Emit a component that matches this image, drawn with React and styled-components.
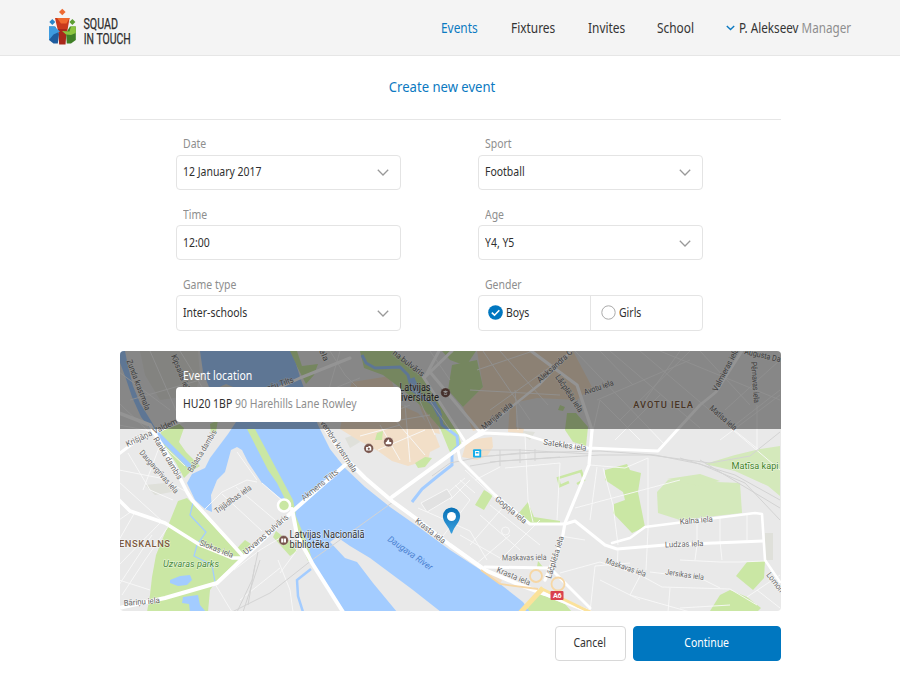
import React from "react";
import styled, { createGlobalStyle } from "styled-components";

const GlobalStyle = createGlobalStyle`
  * { box-sizing: border-box; }
  body {
    margin: 0;
    background: #fff;
    color: #2f2f2f;
    font: 12px/16px "Noto Sans", "Open Sans", sans-serif;
  }
  button { font: inherit; color: inherit; }
`;

const Page = styled.div`
  width: 900px;
  height: 675px;
  overflow: hidden;
`;

/* Condensed face: squeezes the glyphs without touching their height. */
const Narrow = styled.span`
  display: inline-block;
  white-space: nowrap;
  transform: scaleX(${(p) => p.$by || 0.872});
  transform-origin: ${(p) => (p.$center ? "50%" : "0")} 50%;
`;

const Header = styled.header`
  display: flex;
  justify-content: space-between;
  height: 56px;
  padding: 0 42px 0 48px;
  background: #f4f4f4;
  border-bottom: 1px solid #e6e6e6;
`;

const LogoArt = styled.svg`
  display: block;
  width: 92px;
  height: 55px;
`;

const Nav = styled.nav`
  display: flex;
  align-items: center;
  height: 55px;
  font-size: 14px;
`;

const NavLink = styled.a`
  width: ${(p) => p.$width}px;
  color: ${(p) => (p.$active ? "#0b79c1" : "#333")};
`;

const Account = styled.div`
  display: flex;
  align-items: center;
  gap: 4px;
  width: 132px;
  color: #333;
  svg { flex: none; }
`;

const Muted = styled.span`
  color: #8e8e8e;
`;

const Main = styled.main`
  width: 660.5px;
  margin-left: 120px;
`;

const Title = styled.h1`
  margin: 0;
  height: 63px;
  padding-right: 17px;
  text-align: center;
  font-size: 15px;
  line-height: 61px;
  font-weight: 400;
  color: #0b79c1;
`;

const Form = styled.form`
  display: grid;
  grid-template-columns: 225px 225px;
  grid-auto-rows: 70.3px;
  column-gap: 77.3px;
  height: 232.3px;
  padding: 15.3px 0 0 55.7px;
  border-top: 1px solid #e6e6e6;
`;

const Label = styled.label`
  display: block;
  height: 19.4px;
  padding-left: 7px;
  line-height: 18px;
  color: #8e8e8e;
`;

const Control = styled.div`
  display: flex;
  align-items: center;
  justify-content: space-between;
  height: 35.4px;
  padding: 0 11px 0 6px;
  border: 1px solid #e4e4e4;
  border-radius: 4px;
  background: #fff;
`;

const Segments = styled.div`
  display: grid;
  grid-template-columns: 1fr 1fr;
  height: 35.4px;
  border: 1px solid #e4e4e4;
  border-radius: 4px;
`;

const Segment = styled.div`
  display: flex;
  align-items: center;
  gap: 3px;
  padding-left: 9.5px;
  & + & { border-left: 1px solid #e4e4e4; }
`;

const MapPanel = styled.section`
  position: relative;
  height: 260px;
  border-radius: 4px;
  overflow: hidden;
`;

const MapArt = styled.svg`
  display: block;
  width: 661px;
  height: 260px;
`;

const MapShade = styled.div`
  position: absolute;
  inset: 0 0 auto 0;
  height: 78px;
  padding: 16px 0 0 56px;
  background: rgba(0, 0, 0, 0.42);
`;

const LocationLabel = styled.div`
  height: 20px;
  padding-left: 7px;
  line-height: 18px;
  color: #fff;
`;

const LocationField = styled.div`
  display: flex;
  align-items: center;
  width: 225px;
  height: 35px;
  padding: 0 7px 1px;
  border-radius: 4px;
  background: #fff;
`;

const Actions = styled.footer`
  display: flex;
  justify-content: flex-end;
  gap: 7px;
  padding-top: 14.6px;
`;

const Button = styled.button`
  width: ${(p) => (p.$primary ? 148 : 71)}px;
  height: 35.4px;
  padding: 0 0 1px;
  border: 1px solid ${(p) => (p.$primary ? "#0077c0" : "#d8d8d8")};
  border-radius: 4px;
  background: ${(p) => (p.$primary ? "#0077c0" : "#fff")};
  color: ${(p) => (p.$primary ? "#fff" : "#333")};
`;

function Logo() {
  return (
    <LogoArt viewBox="48 0 92 55">
      <path d="M62.3 8.8 65.6 12 62.3 15.2 59 12Z" fill="#ee6a32" />
      <path d="M52.3 19 55.3 22 52.3 25 49.3 22Z" fill="#2a86c8" />
      <path d="M72.4 19 75.4 22 72.4 25 69.4 22Z" fill="#5c9e33" />
      <path d="M55 18H69.6L67 33 58 31Z" fill="#c93a1c" />
      <path d="M57 18H69.6L66.5 23.500 61 23.500Z" fill="#f0692e" />
      <path d="M58 29 66.8 29 65.5 44.5H59.2Z" fill="#a8281a" />
      <path d="M49 26.5 55.2 26.5 59 34 57.8 43.5 53.5 43.5 49 40Z" fill="#1e5c9e" />
      <path d="M49 26.5 54.2 26.5 60 31.5 53.5 34.5 49 40Z" fill="#3d9be0" />
      <path d="M75.8 26.5 70 26.5 66 33 66.8 43.5 71 43.5 75.8 40Z" fill="#3f7f27" />
      <path d="M75.8 26.5 71 26.5 69.5 31.5 62 31 66 34.5 71 35 75.8 33Z" fill="#8cc540" />
      <g fill="#2d2d2d" fontFamily="Roboto, sans-serif" fontSize="14.6" stroke="#2d2d2d" strokeWidth=".25">
        <text x="83.5" y="28.8" textLength="34.5" lengthAdjust="spacingAndGlyphs">SQUAD</text>
        <text x="83.7" y="44" textLength="47" lengthAdjust="spacingAndGlyphs">IN TOUCH</text>
      </g>
    </LogoArt>
  );
}

const Chevron = () => (
  <svg width="12" height="8" viewBox="0 0 12 8" fill="none" stroke="#999" strokeWidth="1.3">
    <path d="M.8 1.8 6 7 11.2 1.8" />
  </svg>
);

const Tick = ({ on }) => (
  <svg width="15" height="15" viewBox="0 0 15 15" fill="none">
    {on ? (
      <>
        <circle cx="7.5" cy="7.5" r="7.3" fill="#0077c0" />
        <path d="M3.8 7.6 6.5 10.2 11.3 5.2" stroke="#fff" strokeWidth="1.6" />
      </>
    ) : (
      <circle cx="7.5" cy="7.5" r="6.7" fill="#fff" stroke="#aaa" />
    )}
  </svg>
);

/* text, start x, start y, end x, end y, kind */
const labels = [
  ["Zunda krastmala", 126.5, 361, 145.5, 411],
  ["Kīpsalas iela", 171, 356, 186, 393],
  ["Krišjāņa Valdem", 127.5, 447, 178, 423],
  ["Ranka dambis", 153, 439, 178, 480],
  ["Balasta dambis", 192, 473, 217, 432],
  ["Daugavgrīvas iela", 139, 453, 175, 494],
  ["nšu Tilts", 268, 391, 294, 382],
  ["vembra krastmala", 320, 423, 353, 473],
  ["Akmens Tilts", 304, 501, 339, 473],
  ["Trijādības iela", 217, 514, 252, 489],
  ["Uzvaras bulvāris", 246, 555, 289, 518],
  ["Slokas iela", 199, 545, 232, 558],
  ["Bāriņu iela", 124, 606, 160, 603],
  ["Krasta iela", 414.5, 522, 443, 544],
  ["Krasta iela", 496, 572, 529, 585.5],
  ["Maskavas iela", 502, 560.5, 546.5, 560],
  ["Lāčplēša iela", 551, 579, 564, 537],
  ["Gogoļa iela", 494.5, 500, 524, 524],
  ["Satekles iela", 543, 444.5, 586, 451],
  ["Marijas iela", 484, 430, 513, 406],
  ["Aleksandra Č", 540, 383, 573, 353],
  ["Lāčplēša iela", 555, 377, 579, 413],
  ["Avotu iela", 585, 395, 614, 385],
  ["Valmieras iela", 717, 392, 739, 350],
  ["Augusta Da", 744, 354, 780, 362],
  ["Pērnavas iela", 751, 362, 754, 403],
  ["Matīsa iela", 709, 409, 734, 431],
  ["Kalna iela", 680, 524.5, 713, 521.5],
  ["Ludzas iela", 665, 547.5, 703.5, 546],
  ["Maskavas iela", 605, 563, 645, 577],
  ["Jersikas iela", 665, 574.5, 703.5, 580],
  ["Lomon", 766, 575, 780, 593],
  ["na bulvāris", 392, 354, 422, 377],
  ["iela", 318, 348, 324, 362],
  ["Latvijas", 399.5, 390.5, 430.5, 390.5, "place"],
  ["iversitāte", 401, 401, 439, 401, "place"],
  ["Latvijas Nacionālā", 289.5, 538, 364.5, 538, "place"],
  ["bibliotēka", 289.5, 548, 329.5, 548, "place"],
  ["ENSKALNS", 119, 546.5, 170, 546.5, "area"],
  ["AVOTU IELA", 633.3, 408, 693, 408, "area"],
  ["Uzvaras parks", 163, 566.5, 219, 566.5, "park"],
  ["Matīsa kapi", 731.5, 469, 778.5, 469, "parkname"],
  ["Daugava River", 387, 540.5, 430, 570.5, "river"],
];

const kinds = {
  street: { fill: "#666", fontSize: 8.2 },
  place: { fill: "#333", fontSize: 10 },
  area: { fill: "#7d5a3e", fontSize: 9.3, fontWeight: 500 },
  park: { fill: "#4a8a3c", fontSize: 9.4, fontStyle: "italic" },
  parkname: { fill: "#3e8227", fontSize: 9.6 },
  river: { fill: "#4a80cf", fontSize: 9, fontStyle: "italic" },
};

function MapLabel({ data }) {
  const [text, x1, y1, x2, y2, kind = "street"] = data;
  const angle = (Math.atan2(y2 - y1, x2 - x1) * 180) / Math.PI;
  const spacing = kind === "area" ? "spacing" : "spacingAndGlyphs";
  return (
    <text
      {...kinds[kind]}
      transform={`translate(${x1} ${y1}) rotate(${angle})`}
      textLength={Math.hypot(x2 - x1, y2 - y1)}
      lengthAdjust={spacing}
      stroke={kind === "river" ? "none" : "rgba(255,255,255,.6)"}
      strokeWidth="1.2"
      paintOrder="stroke"
    >
      {text}
    </text>
  );
}

const water = [
  "M119 351H125L128 366 133 386 140 403 148 416 156 429 165 438 180 453 192 465 190 470 178 458 160 440 151 430 141 417 132 397 125 376 119 360Z",
  "M200 351H290L296 364 301 380 318 425 330 449 345 468 365 487 390 507 420 528 450 550 490 576 523 602 530 612H441L413 590 370 558 350 546 337 537 330 542 345 558 357 562 373 583 397 612H343L327 590 312 560 308 545 292 507 279 497 262 483 248 462 242 450 237 447 231 450 228 461 225 472 217 480 211 495 212 512 205 509 195 500 187 483 192 474 205 468 210 458 216 450 228 434 236 422 215 402 203 372Z",
  "M170 580 180 576 190 575 192 580 187 585 178 586 170 583Z",
  "M183 597 198 595 200 605 206 612H190L189 604 182 603Z",
];

const parks = [
  "M178 501 187 498 192 503 242 556 215 583 210 590 208 612H147L150 595 152 577 156 555 165 533Z",
  "M160 430 177 422 184 428 179 442 186 452 200 466 190 472 184 478 176 463 164 445Z",
  "M289 500 296 512 305 535 313 560 308 561 297 535Z",
  "M289 351H297L302 366 318 364 314 375 306 384Z",
  "M360 351H393L423 377 457 428 461 443 452 456 449 450 440 428 420 405 403 390 383 375 364 368Z",
  "M442 351H476L466 366 450 360Z",
  "M452 365 477 360 483 387 463 407 448 390Z",
  "M567 413H576L588 427 586 446 573 442 565 430Z",
  "M560 405 565 407 563 411 558 410Z",
  "M605 470 627 464 630 470 641 473 638 492 645 527 632 533 613 513 614 504 625 500 623 492 605 480Z",
  "M528 502 534 517 560 521V524H530L518 514Z",
  "M484 490 493 495 484 510 475 505Z",
  "M530 604 540 594 565 604 572 612H526Z",
  "M710 611 720 595 730 590 747 597 761 608 757 612Z",
  "M736 576 747 562 765 561 764 578 753 590Z",
  "M245 540 251 544 247 548 243 556 236 550 240 545Z",
  "M276 531 290 542 297 551 290 556 273 537Z",
  "M538 561 543 567 537 567Z",
  "M377 433 383 431 382 440 375 440Z",
  "M415 463 425 457 432 458 425 467 418 468Z",
];

const lightParks = [
  "M657 492 668 480 740 483 742 513 680 520 658 513Z",
  "M705 464 735 455 760 449 780 446V496L768 486 735 471Z",
  "M667 479 700 474 720 481 700 486Z",
];

const sands = [
  "M477 351H573L592 387 577 400 537 398 513 403 487 427 473 431 463 407 483 387Z",
  "M352 382 390 376 400 405 418 413 433 429 440 447 430 452 428 460 408 466 392 461 378 451 358 440 340 429 346 400Z",
  "M467 440 492 437 493 447 487 456 477 460 462 457Z",
  "M415 395 434 408 440 434 430 432Z",
  "M510 403 516 402 516 427 524 429 523 433 508 432Z",
  "M481 570 502 580 500 585 486 575Z",
];

const minor = [
  "M180 351 210 400 M150 351 178 415 M119 372 170 410 M130 400 200 380",
  "M119 403 149 432 185 466 M119 425 150 431 M119 470 160 478 187 492 M119 482 162 521",
  "M128 453 150 490 173 500 M160 445 143 490 M119 520 132 511 M119 565 160 523 M135 512 119 540 M119 585 152 535",
  "M122 595 145 560 168 527 M119 580 150 590 M205 509 222 492 247 480 257 482 M222 494 262 531 M236 487 275 520",
  "M234 570 260 550 285 535 M280 573 297 550 M278 560 290 590 293 612 M215 584 232 612 M240 600 280 568",
  "M262 483 285 503 M237 452 257 480 M330 351 345 375 375 405 M340 351 320 420 M305 400 360 378",
  "M372 420 410 405 M380 425 400 460 M395 420 425 455 M378 450 425 430 M360 436 400 425 M405 405 410 462",
  "M428 398 450 430 M415 390 435 435 M400 420 430 415 M430 351 450 380",
  "M483 351 530 420 M500 351 548 405 M477 370 530 352 M490 410 560 360 M470 390 560 395 M515 390 518 430",
  "M575 351 665 445 M610 351 700 428 M600 351 633 385 M660 351 780 400 M690 351 620 420 M597 400 690 360 M640 351 780 470",
  "M700 351 750 405 M780 360 725 410 M780 390 735 425 M592 435 600 400 640 440 M615 440 660 395 M680 351 645 400 M720 440 780 395",
  "M734 430 759 450 M757 405 757 450 M525 435 528 500 533 522 M465 470 495 498 M475 480 500 467 M505 468 560 463 557 520",
  "M500 560 540 520 M470 545 505 505 M460 535 500 558 M480 515 520 550 M490 505 540 545 M455 485 470 500 M460 480 475 493 M450 500 470 480 M445 495 465 478",
  "M450 522 470 531 487 560 M418 508 450 522 M440 540 470 500 M475 565 510 535",
  "M597 467 590 520 M603 468 613 505 618 545 M590 465 625 468 648 458V530L646 570 M575 508 680 480",
  "M560 536 585 540 M618 549 617 570 M697 519V545L695 560 M720 517V541L722 560 M747 514V540 M680 560 720 562 740 562 765 561",
  "M590 612 595 566 630 563 M640 576 630 595 690 612 M600 580 640 600 M650 572 700 578 720 588 M670 588 668 612 M680 608 730 605",
  "M747 597 780 575 M757 590 780 608 M560 573 600 562 640 575 662 587 730 589 757 605",
];

const roads = [
  ["M571 351 540 384 483 430", 2.4],
  ["M488 427 463 445 440 462 392 497", 4],
  ["M316 415 345 458 365 478 392 501 418 520 450 545 485 570 520 585 545 594 590 612", 4],
  ["M345 465 293 511 217 583 165 598 119 608", 4],
  ["M119 500 130 511 165 523 200 545 232 558H242", 3.5],
  ["M119 413 150 425 175 468 187 492 192 500 242 555", 3.6],
  ["M119 454 140 438 180 422 260 397", 3],
  ["M250 401 300 378 350 358", 3],
  ["M292 509 297 535 312 563 343 612", 4],
  ["M439 351 425 377 M422 375 464 440 M430 372 480 432 M452 351 425 377", 3],
  ["M463 443 485 433 505 434 525 435 545 441 588 448 658 451 700 405 716 392 742 351", 2.8],
  ["M531 351 577 385 592 430 589 465 565 523 562 540 545 580", 3.2],
  ["M458 450 460 460 495 495 530 524H565L575 521 605 545 617 549 665 545 763 541", 3],
  ["M612 543 630 538 645 527 755 513 762 514 765 560 780 582", 2.6],
  ["M485 567 550 568 590 608", 3],
];

/* centre and glyph of each landmark marker */
const landmarks = [
  [368.7, 448.4, "M-2.6-1.5H-.5L0-2.3H1.5L2.6-1V2H-2.6ZM0-.8A1.1 1.1 0 1 0 .1-.8Z"],
  [388.5, 442, "M-2.8 1.5V0H-1.7V-1.5H-.6V-2.6H.6V-1.5H.8V0H2.8V2.2H-2.8Z"],
  [445.5, 392.7, "M-2.6-1 0-2.2 2.6-1 0 .2ZM-1.6.6V2H1.6V.6L0 1.2Z"],
  [283.6, 540.4, "M-2.4-2H-.3V2H-2.4ZM.3-2H2.4V2H.3Z"],
];

function CityMap() {
  return (
    <MapArt viewBox="120 351 661 260" fontFamily="Roboto, sans-serif">
      <rect x="119" y="351" width="663" height="261" fill="#e9e9e9" />
      <path d="M145 485 165 483 172 492 155 495Z M765 533H773V560H765Z M515 430 535 432 530 440Z M345 438 357 434 360 442 350 448Z" fill="#dfe0da" />
      <path d="M140 351H198L200 375 195 395 160 400 145 375Z" fill="#e2e2dc" />
      {sands.map((d) => <path key={d} d={d} fill="#f2dfc8" />)}
      {lightParks.map((d) => <path key={d} d={d} fill="#d4e9bb" />)}
      {parks.map((d) => <path key={d} d={d} fill="#cae7a4" />)}
      <path d="M569 482 560 486 558 478 581 471 584 480 577 484" fill="none" stroke="#cae7a4" strokeWidth="2.5" />
      {water.map((d) => <path key={d} d={d} fill="#a3ccff" />)}
      <path d="M247 429H255L270 457 293 500 296 515 288 505 277 483 268 470Z" fill="#cae7a4" />
      <path d="M200 396 226 384 245 392 258 388 237 422 226 416 210 422Z" fill="#dcdcd6" />
      <path d="M210 424 218 420 216 432 211 433Z" fill="#cae7a4" />
      <g fill="none" stroke="#a3ccff">
        <path d="M362 355 366 363 375 368 400 367 408 375 412 390 430 402 439 410 442 425 457 436 458 446 452 452V465L438 476 422 489 412 502" strokeWidth="3" />
        <path d="M412 378 420 397M433 402 440 416" strokeWidth="5" />
        <path d="M193 503 190 515 206 532 197 545 194 556 212 565 215 582" strokeWidth="1.3" />
        <path d="M311 569 297 580 298 596 303 612" strokeWidth="2.5" />
      </g>
      <g fill="none" stroke="#f8f8f8" strokeWidth=".9" strokeLinejoin="round">
        {minor.map((d) => <path key={d} d={d} />)}
        <circle cx="505.5" cy="531" r="4" />
        <path d="M421 503 447 489 452 497 427 512Z" fill="#e2e2e2" />
      </g>
      <g fill="none" stroke="#d3d3d3" strokeWidth="1">
        <path d="M432 476 450 463 480 457 520 453 600 451 655 455 700 464 745 483 780 520" />
        <path d="M470 466 500 461 600 455 650 455 710 463 750 456 780 432" />
        <path d="M475 450H520L590 454 M475 457 530 453 M490 462 560 457 M500 450V466M520 449V463 M535 449V461 M680 458 735 475 780 500 M700 460 780 508" />
        <path d="M393 502 312 560 270 593 232 612 M258 552 252 580 237 612 M260 560 243 612 M255 565 248 605" />
      </g>
      <g fill="none" stroke="#fff" strokeLinejoin="round" strokeLinecap="round">
        {roads.map(([d, w]) => <path key={d} d={d} strokeWidth={w} />)}
        <circle cx="284" cy="505.5" r="6" fill="#cae7a4" strokeWidth="2.5" />
      </g>
      <g fill="none" stroke="#f6d7a5" strokeWidth="1.8">
        <circle cx="536" cy="576" r="6" />
        <circle cx="558" cy="584" r="6.5" />
        <path d="M481 570 500 584 538 589 M576 606 597 614" />
      </g>
      <path d="M520 613 543 588" stroke="#fbe29b" strokeWidth="5" />
      <path d="M540 588 565 600 590 612" fill="none" stroke="#fbe29b" strokeWidth="3" />
      {labels.map((l) => <MapLabel key={l[0] + l[1]} data={l} />)}
      <rect x="550.5" y="591" width="13" height="9" rx="1" fill="#d9424e" />
      <text x="553" y="598.3" fill="#fff" fontSize="7.2" fontWeight="700" textLength="8.5">A6</text>
      {landmarks.map(([x, y, d]) => (
        <g key={x} transform={`translate(${x} ${y})`}>
          <circle r="4.8" fill="#77544b" stroke="#fff" strokeWidth=".5" strokeOpacity=".6" />
          <path d={d} fill="#fff" fillRule="evenodd" />
        </g>
      ))}
      <rect x="473" y="449.2" width="8.2" height="8.2" rx="1" fill="#16aeea" />
      <path d="M475 451H479.3V455.8H475ZM475.8 452V453.6H478.5V452Z" fill="#fff" fillRule="evenodd" />
      <defs>
        <linearGradient id="pin" x1="0" y1="0" x2="0" y2="1">
          <stop offset="0" stopColor="#0871b6" />
          <stop offset="1" stopColor="#3a9fdd" />
        </linearGradient>
      </defs>
      <path fill="url(#pin)" d="M451.5 507.5A8.6 8.6 0 0 0 442.9 516.1C442.9 522.5 448.3 525.6 450.9 533.2Q451.5 534 452.1 533.2C454.7 525.6 460.1 522.5 460.1 516.1A8.6 8.6 0 0 0 451.5 507.5Z" />
      <circle cx="451.5" cy="516.5" r="4.5" fill="#fff" />
    </MapArt>
  );
}

function Field({ label, value, select }) {
  return (
    <div>
      <Label><Narrow>{label}</Narrow></Label>
      <Control>
        <Narrow>{value}</Narrow>
        {select && <Chevron />}
      </Control>
    </div>
  );
}

export default function App() {
  return (
    <Page>
      <GlobalStyle />
      <Header>
        <Logo />
        <Nav>
          <NavLink $active $width={69.5}><Narrow $by={0.85}>Events</Narrow></NavLink>
          <NavLink $width={77.5}><Narrow $by={0.85}>Fixtures</Narrow></NavLink>
          <NavLink $width={69}><Narrow $by={0.85}>Invites</Narrow></NavLink>
          <NavLink $width={69}><Narrow $by={0.85}>School</Narrow></NavLink>
          <Account>
            <svg width="9" height="6" viewBox="0 0 9 6" fill="none" stroke="#0b79c1" strokeWidth="1.4">
              <path d="M.8 1 4.5 4.6 8.2 1" />
            </svg>
            <Narrow $by={0.835}>P. Alekseev <Muted>Manager</Muted></Narrow>
          </Account>
        </Nav>
      </Header>
      <Main>
        <Title><Narrow $center>Create new event</Narrow></Title>
        <Form>
          <Field label="Date" value="12 January 2017" select />
          <Field label="Sport" value="Football" select />
          <Field label="Time" value="12:00" />
          <Field label="Age" value="Y4, Y5" select />
          <Field label="Game type" value="Inter-schools" select />
          <div>
            <Label><Narrow>Gender</Narrow></Label>
            <Segments>
              <Segment><Tick on /><Narrow>Boys</Narrow></Segment>
              <Segment><Tick /><Narrow>Girls</Narrow></Segment>
            </Segments>
          </div>
        </Form>
        <MapPanel>
          <CityMap />
          <MapShade>
            <LocationLabel><Narrow>Event location</Narrow></LocationLabel>
            <LocationField>
              <Narrow>HU20 1BP <Muted>90 Harehills Lane Rowley</Muted></Narrow>
            </LocationField>
          </MapShade>
        </MapPanel>
        <Actions>
          <Button><Narrow $center>Cancel</Narrow></Button>
          <Button $primary><Narrow $center>Continue</Narrow></Button>
        </Actions>
      </Main>
    </Page>
  );
}
